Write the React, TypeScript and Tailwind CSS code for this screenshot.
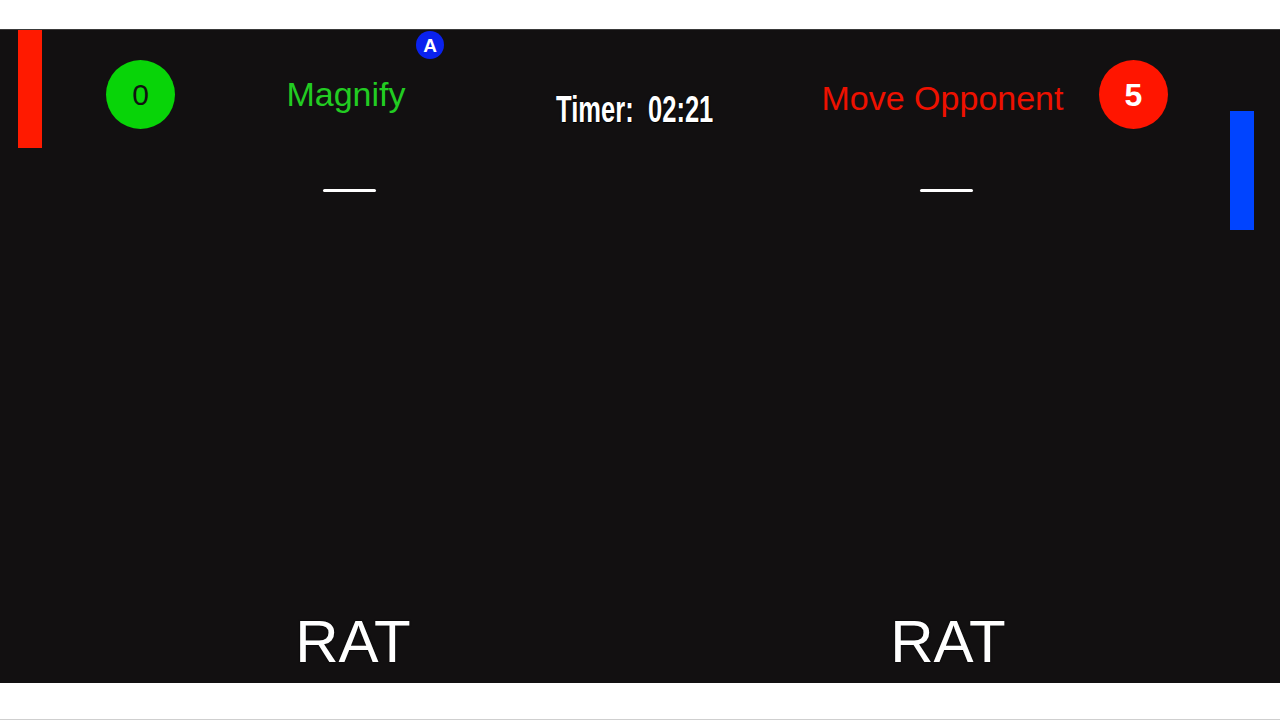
const App = () => {
  return (
    <div className="h-[720px] w-[1280px] bg-white flex flex-col font-['Liberation_Sans',Arial,sans-serif]">
      <div className="h-[29px]" />
      <div className="relative h-[654px] bg-[#121011] border-t border-[#3a3a3a] overflow-hidden">
        {/* paddles + bonus token */}
        <div className="absolute left-[18px] top-0 w-[24px] h-[118px] bg-[#ff1a00]" />
        <div className="absolute left-[1230px] top-[81px] w-[24px] h-[119px] bg-[#0044ff]" />
        <div className="absolute left-[416px] top-[1px] w-[28px] h-[28px] rounded-full bg-[#0a22ee] flex items-center justify-center text-white text-[19px] font-bold leading-none">
          A
        </div>

        <div className="flex items-start pl-[106px]">
          <div className="mt-[30px] w-[69px] h-[69px] rounded-full bg-[#08d408] flex items-center justify-center text-[30px] leading-none text-[#111]">
            0
          </div>

          <div className="ml-[24px] mt-[44px] w-[300px] flex flex-col items-center">
            <div className="text-[34px] leading-[40px] text-[#22cc22] pr-[6px]">Magnify</div>
            <div className="h-[3px] w-[53px] bg-white rounded-sm mt-[75px]" />
            <div className="mt-[420px] text-[60px] leading-[60px] text-white pl-[8px] [text-shadow:0_0_2px_#000]">RAT</div>
          </div>

          <div className="w-[297px] mt-[60px] flex justify-center pr-[25px]">
            <div className="text-[36px] leading-[40px] font-bold text-white scale-x-[0.71] whitespace-pre [text-shadow:0_0_2px_#000,1px_1px_0_#000]">
              {'Timer:  02:21'}
            </div>
          </div>

          <div className="mt-[48px] w-[300px] flex flex-col items-center">
            <div className="text-[34px] leading-[40px] text-[#ee1100] pr-[7px]">Move Opponent</div>
            <div className="h-[3px] w-[53px] bg-white rounded-sm mt-[71px]" />
            <div className="mt-[420px] text-[60px] leading-[60px] text-white pl-[4px] [text-shadow:0_0_2px_#000]">RAT</div>
          </div>

          <div className="ml-[3px] mt-[30px] w-[69px] h-[69px] rounded-full bg-[#ff1500] flex items-center justify-center text-[32px] font-bold leading-none text-white">
            5
          </div>
        </div>
      </div>
      <div className="flex-1 border-b border-[#cfcfcf]" />
    </div>
  );
};

export default App;
